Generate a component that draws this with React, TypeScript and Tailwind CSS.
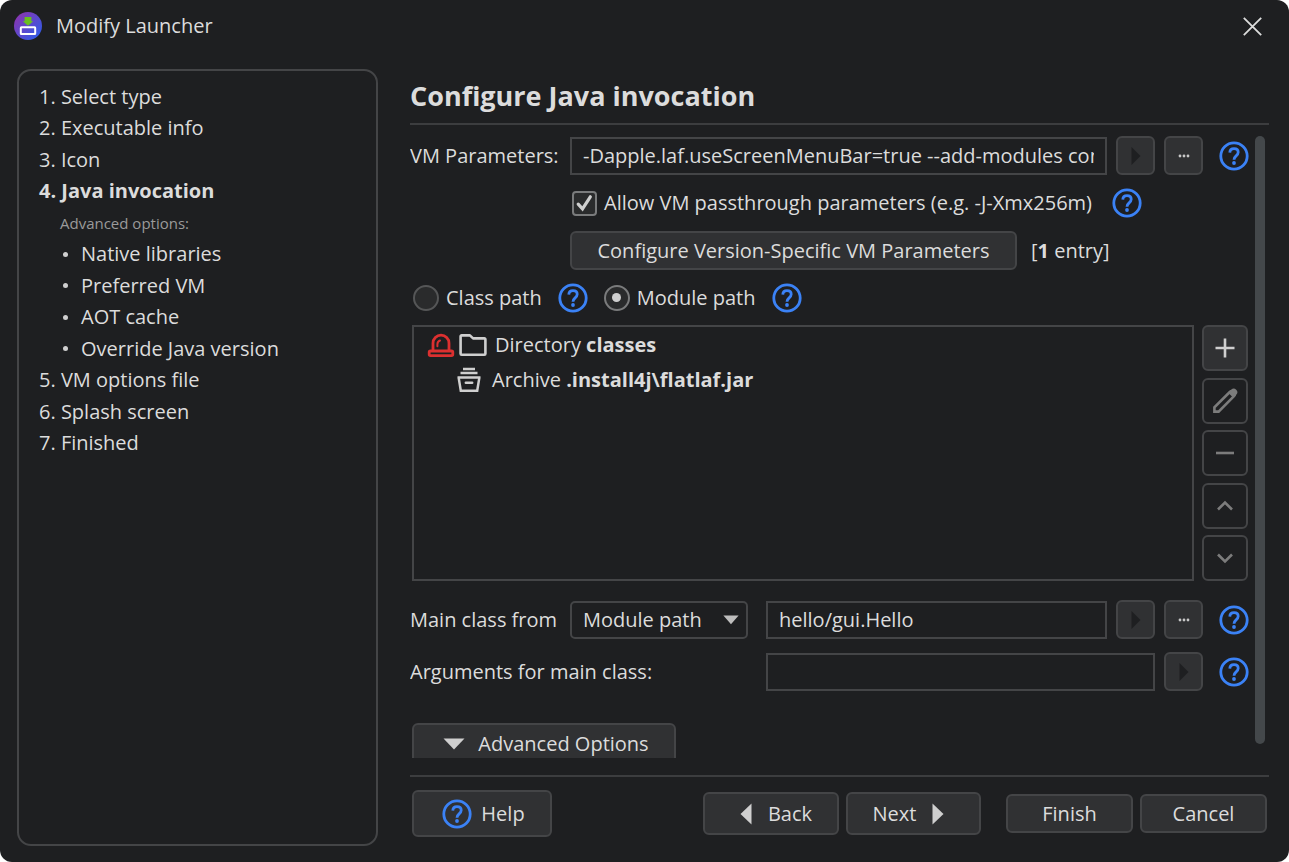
import { useState } from 'react';
import type { ReactNode } from 'react';

type Step = { label: string; kind: 'step' | 'note' | 'sub'; number?: number; current?: boolean };

const steps: Step[] = [
  { kind: 'step', number: 1, label: 'Select type' },
  { kind: 'step', number: 2, label: 'Executable info' },
  { kind: 'step', number: 3, label: 'Icon' },
  { kind: 'step', number: 4, label: 'Java invocation', current: true },
  { kind: 'note', label: 'Advanced options:' },
  { kind: 'sub', label: 'Native libraries' },
  { kind: 'sub', label: 'Preferred VM' },
  { kind: 'sub', label: 'AOT cache' },
  { kind: 'sub', label: 'Override Java version' },
  { kind: 'step', number: 5, label: 'VM options file' },
  { kind: 'step', number: 6, label: 'Splash screen' },
  { kind: 'step', number: 7, label: 'Finished' },
];

const buttonBase = 'flex shrink-0 items-center justify-center rounded-md border-2 border-[#444547] bg-[#303133]';
const fieldBase = 'h-[38px] min-w-0 flex-1 border-2 border-[#444547] bg-transparent px-[11px] text-[#dcdcdc] outline-none';

function AppLogo() {
  return (
    <svg width="28" height="28" viewBox="0 0 28 28" aria-hidden="true">
      <defs>
        <linearGradient id="logo" x1="0" y1="0" x2="1" y2="1">
          <stop offset="0.1" stopColor="#8a35b0" />
          <stop offset="0.9" stopColor="#2f5be8" />
        </linearGradient>
      </defs>
      <circle cx="14" cy="14" r="14" fill="url(#logo)" />
      <rect x="6.8" y="15.3" width="14.4" height="6.8" rx="0.6" fill="none" stroke="#fff" strokeWidth="2" />
      <path d="M10.6 5h6.8v4.2h1.8L14 13.8 8.8 9.2h1.8z" fill="#6abf1e" />
    </svg>
  );
}

function HelpIcon() {
  return (
    <svg width="30" height="30" viewBox="0 0 30 30" fill="none" stroke="#3b82f6" aria-hidden="true">
      <circle cx="15" cy="15" r="13.2" strokeWidth="2.8" />
      <path d="M10.8 11.6C10.9 9.1 12.6 7.7 15 7.7s4.2 1.4 4.2 3.6c0 1.6-.8 2.4-2.1 3.6-1.4 1.2-2.1 2-2.1 3.8" strokeWidth="2.8" />
      <circle cx="15" cy="22" r="1.9" fill="#3b82f6" stroke="none" />
    </svg>
  );
}

function HelpButton({ topic }: { topic: string }) {
  return (
    <button type="button" aria-label={`Help: ${topic}`} className="shrink-0">
      <HelpIcon />
    </button>
  );
}

function VariableButton() {
  return (
    <button type="button" aria-label="Insert variable" disabled className={`${buttonBase} size-[39px]`}>
      <svg width="10" height="18" viewBox="0 0 10 18">
        <path d="M0.5 0v18l9-9z" fill="#1e1f21" />
      </svg>
    </button>
  );
}

function BrowseButton() {
  return (
    <button type="button" aria-label="Browse" className={`${buttonBase} size-[39px]`}>
      <svg width="12" height="4" viewBox="0 0 12 4" fill="#c8c8c8">
        <circle cx="2" cy="2" r="1.4" />
        <circle cx="6" cy="2" r="1.4" />
        <circle cx="10" cy="2" r="1.4" />
      </svg>
    </button>
  );
}

function ToolButton({ label, enabled, children }: { label: string; enabled?: boolean; children: ReactNode }) {
  return (
    <button
      type="button"
      aria-label={label}
      disabled={!enabled}
      className={`flex size-[46px] items-center justify-center rounded-md border-2 border-[#444547] ${enabled ? 'bg-[#303133]' : ''}`}
    >
      <svg width="28" height="28" viewBox="0 0 28 28" fill="none" stroke={enabled ? '#cfcfcf' : '#7c7c7c'} strokeWidth="2.6">
        {children}
      </svg>
    </button>
  );
}

function PathRadio({ label, checked, onChange }: { label: string; checked: boolean; onChange: () => void }) {
  return (
    <label className="flex items-center gap-[7px]">
      <input
        type="radio"
        name="path-type"
        checked={checked}
        onChange={onChange}
        className="flex size-[26px] appearance-none items-center justify-center rounded-full border-2 border-[#555657] bg-[#2a2b2c] before:size-[9px] before:rounded-full checked:border-[#7a7b7c] checked:before:bg-[#cfcfcf]"
      />
      {label}
    </label>
  );
}

export default function App() {
  const [vmParameters, setVmParameters] = useState('-Dapple.laf.useScreenMenuBar=true --add-modules com');
  const [passthrough, setPassthrough] = useState(true);
  const [pathType, setPathType] = useState<'class' | 'module'>('module');
  const [mainClass, setMainClass] = useState('hello/gui.Hello');
  const [args, setArgs] = useState('');

  return (
    <div className="flex h-screen flex-col overflow-hidden rounded-[12px] bg-[#1e1f21] font-['Open_Sans',sans-serif] text-[20px] leading-7 text-[#dcdcdc]">
      <header className="flex h-[52px] shrink-0 items-center gap-[14px] pr-[27px] pl-[14px]">
        <AppLogo />
        <h1 className="flex-1">Modify Launcher</h1>
        <button type="button" aria-label="Close">
          <svg width="19" height="19" viewBox="0 0 19 19" fill="none" stroke="#dcdcdc" strokeWidth="1.8">
            <path d="M0.8 0.8l17.4 17.4M18.2 0.8L0.8 18.2" />
          </svg>
        </button>
      </header>

      <div className="flex min-h-0 flex-1 gap-8 pt-[17px] pr-5 pl-[17px]">
        <nav className="mb-4 w-[361px] shrink-0 rounded-[14px] border-2 border-[#444547] px-5 pt-[10px]">
          <ul className="grid h-[378px] auto-rows-fr items-center">
            {steps.map(step => {
              if (step.kind === 'note') {
                return <li key={step.label} className="pl-[21px] text-[15px] text-[#9a9a9a]">{step.label}</li>;
              }
              if (step.kind === 'sub') {
                return (
                  <li key={step.label} className="flex items-center gap-[13px] pl-6">
                    <span className="size-[5px] rounded-full bg-[#cfcfcf]" />
                    {step.label}
                  </li>
                );
              }
              return (
                <li key={step.label} className={step.current ? 'font-bold' : ''} aria-current={step.current ? 'step' : undefined}>
                  {step.number}. {step.label}
                </li>
              );
            })}
          </ul>
        </nav>

        <main className="flex min-w-0 flex-1 flex-col">
          <h2 className="border-b-2 border-[#3c3d3f] pt-[9px] pb-[9px] text-[27px] leading-9 font-bold">
            Configure Java invocation
          </h2>

          <div className="flex min-h-0 flex-1 gap-[6px] overflow-hidden pt-[11px] pr-1">
            <div className="min-w-0 flex-1">
              <div className="flex items-center">
                <label htmlFor="vm-parameters" className="w-[160px] shrink-0">VM Parameters:</label>
                <div className="flex min-w-0 flex-1 items-center gap-[9px]">
                  <input
                    id="vm-parameters"
                    type="text"
                    value={vmParameters}
                    onChange={e => setVmParameters(e.target.value)}
                    className={fieldBase}
                  />
                  <VariableButton />
                  <BrowseButton />
                  <div className="flex pl-[7px]"><HelpButton topic="VM parameters" /></div>
                </div>
              </div>

              <div className="flex h-[56px] items-center gap-5 pl-[162px]">
                <label className="flex items-center gap-[7px]">
                  <span className="relative flex">
                    <input
                      type="checkbox"
                      checked={passthrough}
                      onChange={e => setPassthrough(e.target.checked)}
                      className="size-[25px] appearance-none rounded-[4px] border-2 border-[#7a7b7c] bg-[#2a2b2c]"
                    />
                    {passthrough && (
                      <svg className="pointer-events-none absolute inset-0" width="25" height="25" viewBox="0 0 25 25" fill="none" stroke="#cfcfcf" strokeWidth="3.2">
                        <path d="M6.2 13.2l4.3 4.6L18.3 5.8" strokeLinecap="round" />
                      </svg>
                    )}
                  </span>
                  Allow VM passthrough parameters (e.g. -J-Xmx256m)
                </label>
                <HelpButton topic="Passthrough parameters" />
              </div>

              <div className="flex items-center gap-[14px] pl-[160px]">
                <button type="button" className={`${buttonBase} h-[39px] w-[447px]`}>
                  Configure Version-Specific VM Parameters
                </button>
                <span>[<b>1</b> entry]</span>
              </div>

              <div className="flex h-[55px] items-center gap-4 pl-[3px]">
                <PathRadio label="Class path" checked={pathType === 'class'} onChange={() => setPathType('class')} />
                <HelpButton topic="Class path" />
                <PathRadio label="Module path" checked={pathType === 'module'} onChange={() => setPathType('module')} />
                <HelpButton topic="Module path" />
              </div>

              <div className="flex h-64 gap-[8px] pr-px pl-[2px]">
                <ul className="min-w-0 flex-1 border-2 border-[#444547] pl-[13px]">
                  <li className="flex h-[35px] items-center gap-1">
                    <svg width="28" height="28" viewBox="0 0 28 28" fill="none" stroke="#dc3030" strokeWidth="2.8" strokeLinejoin="round" aria-hidden="true">
                      <path d="M6 20V12.2a8 8 0 0 1 16 0V20" />
                      <path d="M10.4 15.2v-2a4 4 0 0 1 2.6-3.7" strokeWidth="2" strokeLinecap="round" />
                      <rect x="2.2" y="20" width="23.6" height="4.6" rx="1.3" />
                    </svg>
                    <svg width="28" height="28" viewBox="0 0 28 28" fill="none" stroke="#cfcfcf" strokeWidth="2.6" strokeLinejoin="round" aria-hidden="true">
                      <path d="M1.6 5.4a1 1 0 0 1 1-1h8.3l3.2 3h11.3a1 1 0 0 1 1 1v14.3a1 1 0 0 1-1 1H2.6a1 1 0 0 1-1-1z" />
                    </svg>
                    <span className="pl-1">Directory <b>classes</b></span>
                  </li>
                  <li className="flex h-[35px] items-center pl-[29px]">
                    <svg width="26" height="28" viewBox="0 0 26 28" fill="none" stroke="#cfcfcf" strokeWidth="2.5" aria-hidden="true">
                      <path d="M7 3h12M4.5 7h17M1.5 11.4h23M2.6 11.4l2.2 13.4h16.4l2.2-13.4" />
                      <path d="M9.8 16.8h6.4" strokeLinecap="round" />
                    </svg>
                    <span className="pl-[10px]">Archive <b>.install4j\flatlaf.jar</b></span>
                  </li>
                </ul>
                <div className="flex flex-col justify-between">
                  <ToolButton label="Add" enabled>
                    <path d="M14 4.5v19M4.5 14h19" />
                  </ToolButton>
                  <ToolButton label="Edit">
                    <path d="M3.4 24.6v-4.2L18.8 5a2.5 2.5 0 0 1 4.2 4.2L7.6 24.6z" />
                    <path d="M17.2 5.8l3-3a3.2 3.2 0 0 1 5 5l-3 3z" fill="#7c7c7c" stroke="none" />
                  </ToolButton>
                  <ToolButton label="Remove">
                    <path d="M5 14h18" />
                  </ToolButton>
                  <ToolButton label="Move up">
                    <path d="M7 17.5l7-7 7 7" />
                  </ToolButton>
                  <ToolButton label="Move down">
                    <path d="M7 10.5l7 7 7-7" />
                  </ToolButton>
                </div>
              </div>

              <div className="flex items-center pt-[19px]">
                <label htmlFor="main-class-source" className="w-[160px] shrink-0">Main class from</label>
                <div className="relative w-[178px] shrink-0">
                  <select
                    id="main-class-source"
                    value={pathType}
                    onChange={e => setPathType(e.target.value as 'class' | 'module')}
                    className="block h-[38px] w-full appearance-none rounded-[5px] border-2 border-[#444547] bg-[#1e1f21] pl-[11px] outline-none"
                  >
                    <option value="class">Class path</option>
                    <option value="module">Module path</option>
                  </select>
                  <svg className="pointer-events-none absolute top-[14px] right-[9px]" width="16" height="10" viewBox="0 0 16 10">
                    <path d="M0.4 0.5h15.2L8 9.3z" fill="#bdbdbd" />
                  </svg>
                </div>
                <div className="flex min-w-0 flex-1 items-center gap-[9px] pl-[18px]">
                  <input
                    type="text"
                    aria-label="Main class"
                    value={mainClass}
                    onChange={e => setMainClass(e.target.value)}
                    className={fieldBase}
                  />
                  <VariableButton />
                  <BrowseButton />
                  <div className="flex pl-[7px]"><HelpButton topic="Main class" /></div>
                </div>
              </div>

              <div className="flex items-center pt-[13px]">
                <label htmlFor="arguments" className="w-[356px] shrink-0">Arguments for main class:</label>
                <div className="flex min-w-0 flex-1 items-center gap-[9px]">
                  <input
                    id="arguments"
                    type="text"
                    value={args}
                    onChange={e => setArgs(e.target.value)}
                    className={fieldBase}
                  />
                  <VariableButton />
                  <div className="flex pl-[7px]"><HelpButton topic="Arguments" /></div>
                </div>
              </div>

              <div className="pt-8 pl-[2px]">
                <button type="button" className={`${buttonBase} h-[42px] w-[264px] gap-[13px] pl-1`}>
                  <svg width="22" height="12" viewBox="0 0 22 12">
                    <path d="M0.5 0.5h21L11 11.5z" fill="#cfcfcf" />
                  </svg>
                  Advanced Options
                </button>
              </div>
            </div>

            <div className="mb-[14px] w-[10px] shrink-0 rounded-full bg-[#44484b]" />
          </div>

          <footer className="mt-[17px] flex shrink-0 items-center border-t-2 border-[#3c3d3f] pt-[13px] pr-[2px] pb-[25px] pl-[2px]">
            <button type="button" className={`${buttonBase} h-[47px] w-[140px] gap-[9px] pl-[3px]`}>
              <HelpIcon />
              Help
            </button>
            <div className="ml-auto flex items-center gap-[7px]">
              <button type="button" className={`${buttonBase} h-[43px] w-[136px] gap-4 pl-[10px]`}>
                <svg width="12" height="22" viewBox="0 0 12 22">
                  <path d="M11.5 0.5v21L0.5 11z" fill="#cfcfcf" />
                </svg>
                Back
              </button>
              <button type="button" className={`${buttonBase} h-[43px] w-[135px] gap-4 pr-[10px]`}>
                Next
                <svg width="12" height="22" viewBox="0 0 12 22">
                  <path d="M0.5 0.5v21l11-10.5z" fill="#cfcfcf" />
                </svg>
              </button>
            </div>
            <div className="ml-[25px] flex items-center gap-[7px]">
              <button type="button" className={`${buttonBase} h-[39px] w-[127px]`}>Finish</button>
              <button type="button" className={`${buttonBase} h-[39px] w-[127px]`}>Cancel</button>
            </div>
          </footer>
        </main>
      </div>
    </div>
  );
}
